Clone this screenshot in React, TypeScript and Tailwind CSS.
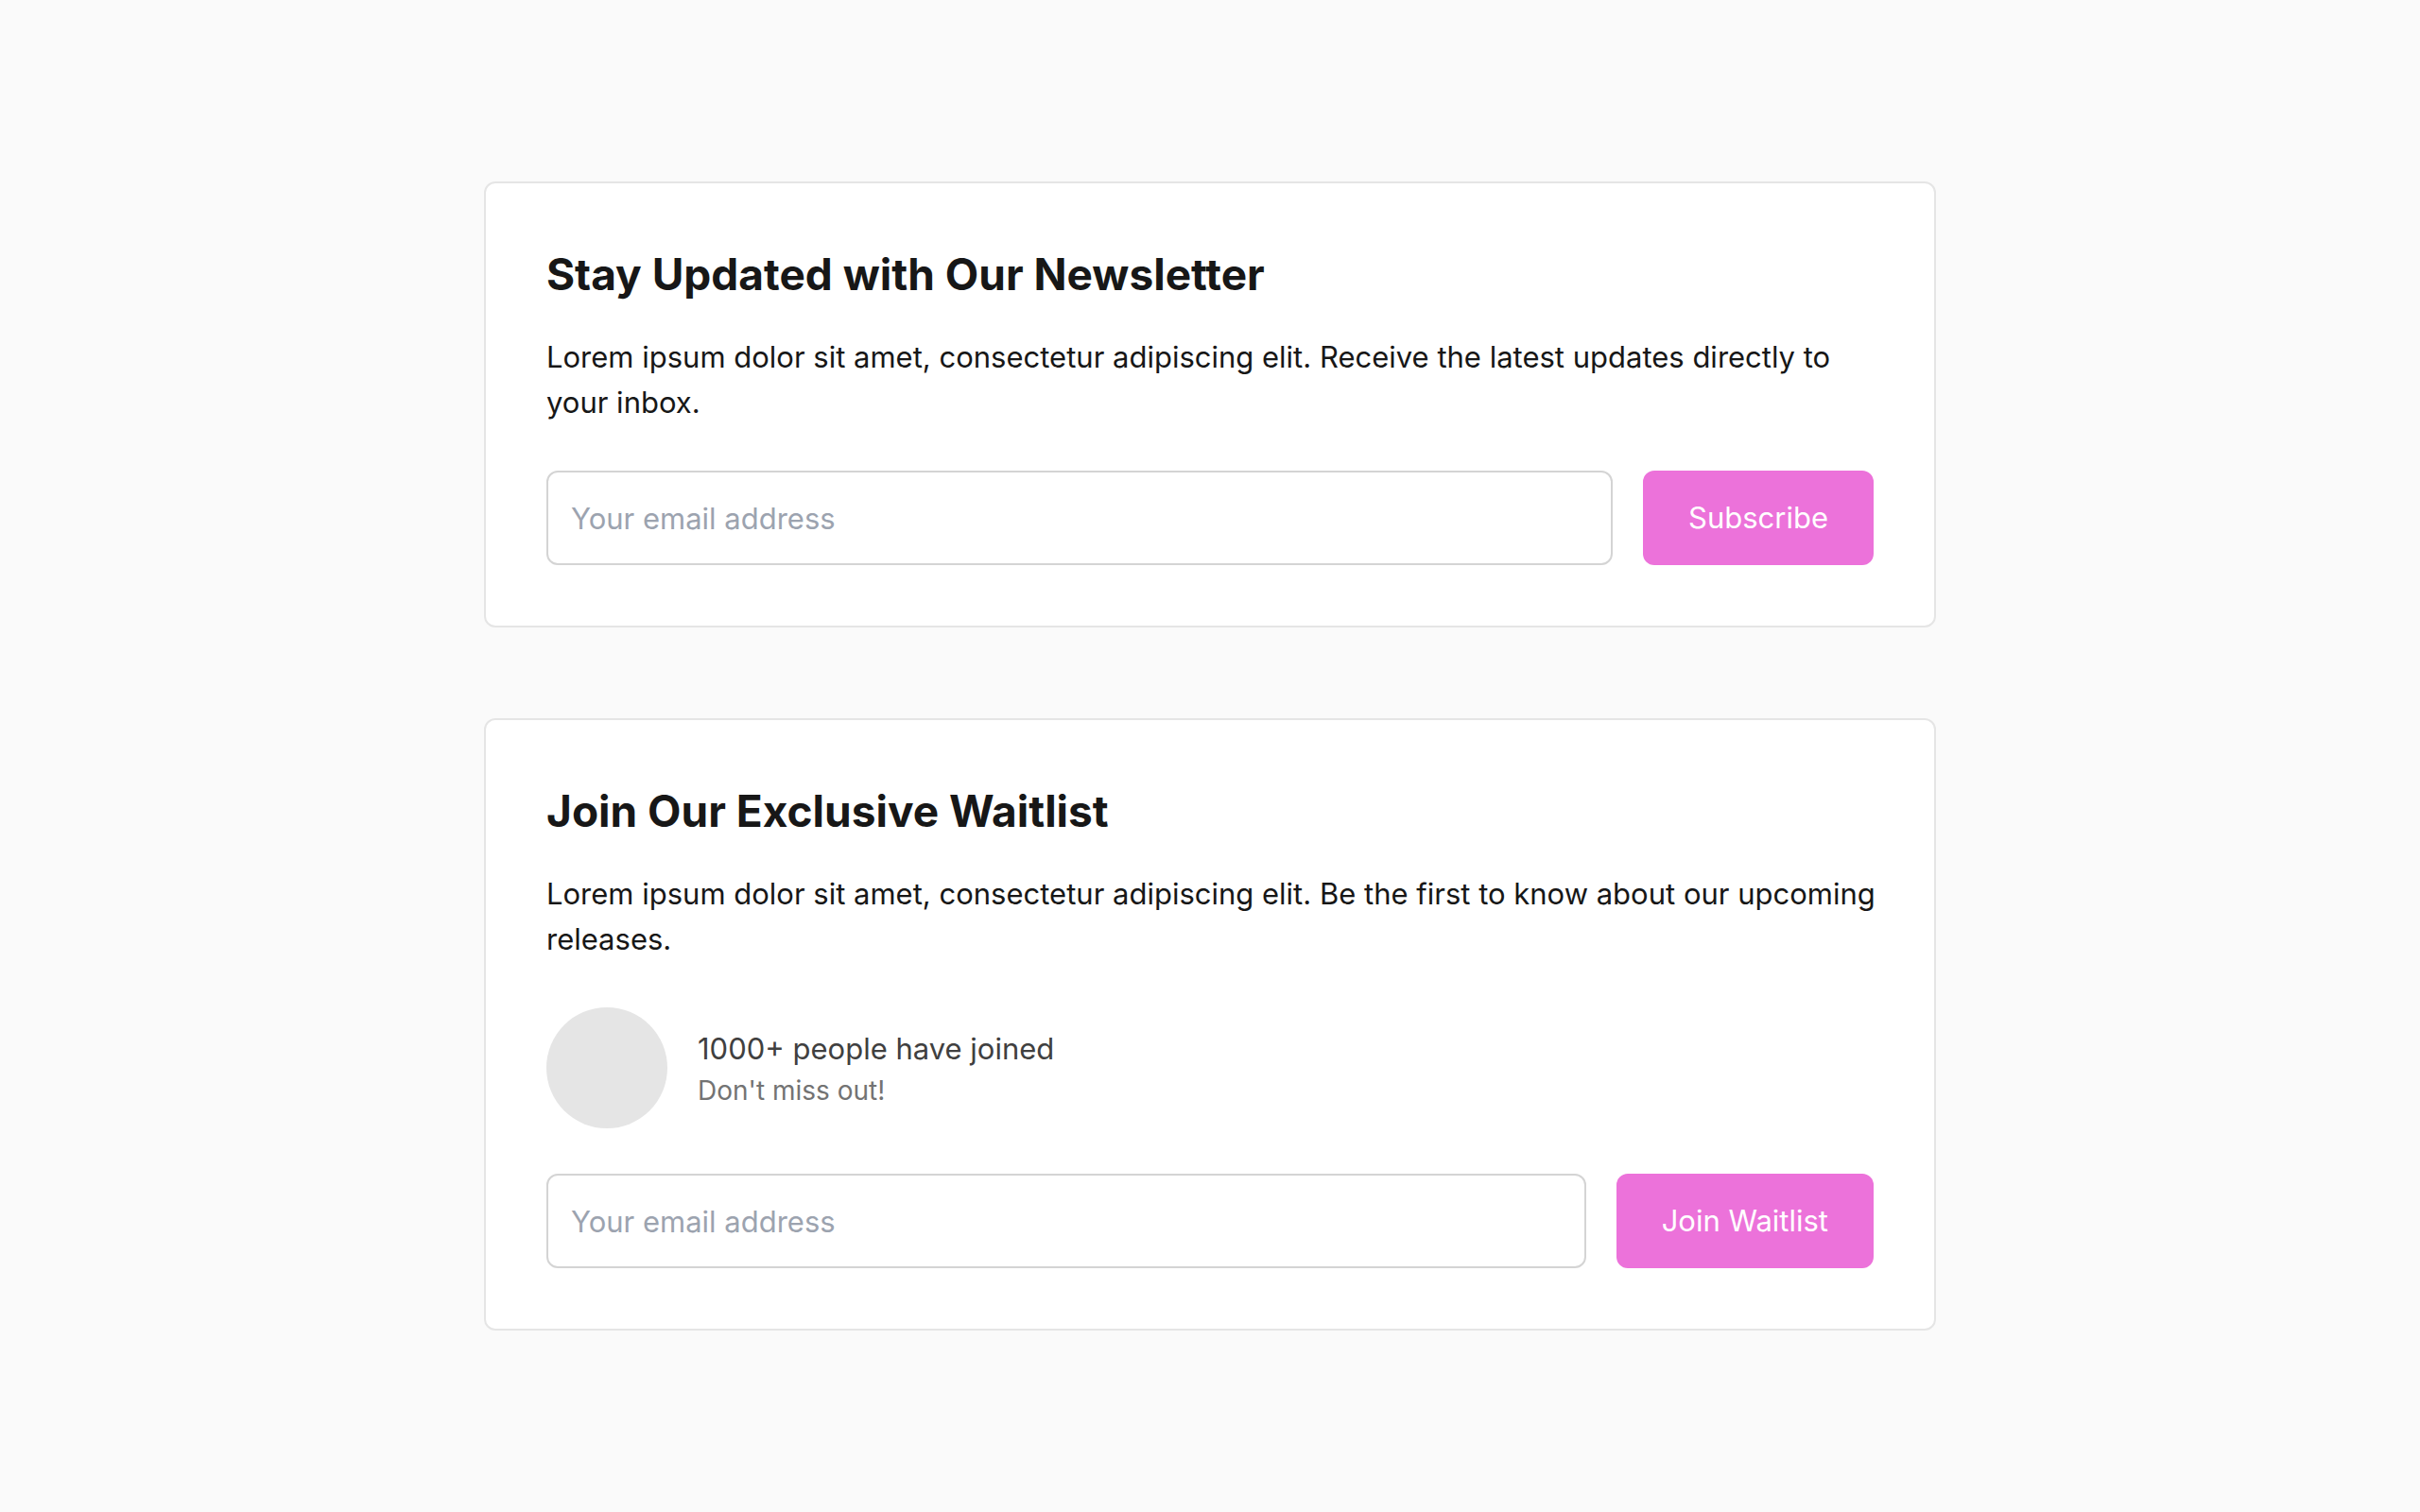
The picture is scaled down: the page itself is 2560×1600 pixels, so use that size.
import type { ReactNode } from "react";

type SignupCardProps = {
  title: string;
  description: string;
  action: string;
  children?: ReactNode;
};

function SignupCard({ title, description, action, children }: SignupCardProps) {
  return (
    <section className="rounded-xl border-2 border-[#e5e5e5] bg-white p-16">
      <h2 className="mb-8 text-[46px] leading-[64px] font-bold text-[#171717]">{title}</h2>
      <p className="-mr-4 mb-12 text-[31px] leading-[48px] text-[#171717]">{description}</p>
      {children}
      <form className="flex gap-8" onSubmit={(e) => e.preventDefault()}>
        <input
          type="email"
          aria-label="Your email address"
          placeholder="Your email address"
          className="h-[100px] min-w-0 flex-1 rounded-xl border-2 border-[#d4d4d4] bg-white px-6 text-[31px] text-[#171717] placeholder:text-[#9ca3af]"
        />
        <button
          type="submit"
          className="h-[100px] shrink-0 rounded-xl bg-[#ec72da] px-12 text-[31px] text-white"
        >
          {action}
        </button>
      </form>
    </section>
  );
}

export default function App() {
  return (
    <div className="min-h-screen bg-[#fafafa] px-6 py-48 font-['Inter',sans-serif]">
      <main className="mx-auto flex max-w-[1536px] flex-col gap-24">
        <SignupCard
          title="Stay Updated with Our Newsletter"
          description="Lorem ipsum dolor sit amet, consectetur adipiscing elit. Receive the latest updates directly to your inbox."
          action="Subscribe"
        />
        <SignupCard
          title="Join Our Exclusive Waitlist"
          description="Lorem ipsum dolor sit amet, consectetur adipiscing elit. Be the first to know about our upcoming releases."
          action="Join Waitlist"
        >
          <div className="mb-12 flex items-center gap-8">
            <div className="size-32 shrink-0 rounded-full bg-[#e5e5e5]" />
            <div>
              <p className="text-[31px] leading-[48px] text-[#404040]">1000+ people have joined</p>
              <p className="text-[28px] leading-[40px] text-[#737373]">Don't miss out!</p>
            </div>
          </div>
        </SignupCard>
      </main>
    </div>
  );
}
